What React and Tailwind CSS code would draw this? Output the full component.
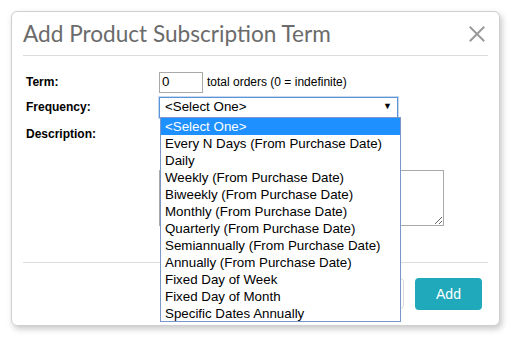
import React from "react";

const options = [
  "<Select One>",
  "Every N Days (From Purchase Date)",
  "Daily",
  "Weekly (From Purchase Date)",
  "Biweekly (From Purchase Date)",
  "Monthly (From Purchase Date)",
  "Quarterly (From Purchase Date)",
  "Semiannually (From Purchase Date)",
  "Annually (From Purchase Date)",
  "Fixed Day of Week",
  "Fixed Day of Month",
  "Specific Dates Annually",
];

export default function App() {
  return (
    <div className="relative w-[526px] h-[349px] bg-white overflow-hidden pt-[11px] pl-[11px] [font-family:'Liberation_Sans',Arial,sans-serif]">
      <div className="relative w-[489px] h-[315px] bg-white border border-[#cfcfcf] rounded-[6px] shadow-[2px_3px_6px_rgba(0,0,0,0.22)] flex flex-col">
        {/* header */}
        <div className="mx-[11px] h-[44px] shrink-0 border-b border-[#dcdcdc] flex items-center justify-between">
          <h1 className="text-[22.6px] leading-none text-[#6b6b6b] [font-family:Lato,'Open_Sans',sans-serif] mt-[1px]">
            Add Product Subscription Term
          </h1>
          <svg width="16" height="16" viewBox="0 0 16 16" className="mr-[3px] mt-[1px]">
            <path d="M1.5 1.5 L14.5 14.5 M14.5 1.5 L1.5 14.5" stroke="#9a9a9a" strokeWidth="2" strokeLinecap="square" />
          </svg>
        </div>
        {/* body */}
        <div className="flex-1 pl-[14px] pr-[43px] pt-[16px] text-[12px] text-black">
          <div className="flex items-center h-[20px]">
            <div className="w-[133px] font-bold">Term:</div>
            <div className="w-[44px] h-[21px] border border-[#a9a9a9] flex items-center pl-[2px] text-[13.33px]">0</div>
            <div className="ml-[4px]">total orders (0 = indefinite)</div>
          </div>
          <div className="flex items-center h-[20px] mt-[5px]">
            <div className="w-[133px] font-bold">Frequency:</div>
            <div className="w-[239px] h-[21px] border border-[#5b93d8] shadow-[0_0_0_1px_rgba(91,147,216,0.35)] flex items-center justify-between pl-[5px] pr-[5px] text-[13.33px] bg-white">
              <span>&lt;Select One&gt;</span>
              <span className="text-[9px]">▼</span>
            </div>
          </div>
          <div className="flex mt-[10px]">
            <div className="w-[133px] font-bold leading-[15px]">Description:</div>
          </div>
          <div className="flex mt-[28px]">
            <div className="w-[133px]"></div>
            <textarea className="w-[285px] h-[56px] border border-[#a9a9a9] resize-y outline-none" defaultValue="" />
          </div>
        </div>
        {/* footer */}
        <div className="mx-[11px] shrink-0 border-t border-[#dcdcdc] h-[63px] flex items-start justify-end pt-[15px] pr-[6px] gap-[11px]">
          <button className="w-[70px] h-[31px] border border-[#d9d9d9] rounded-[4px] bg-white text-[14px] text-[#333]">Cancel</button>
          <button className="w-[67px] h-[32px] rounded-[4px] bg-[#1fa9bb] text-white text-[14px]">Add</button>
        </div>

        {/* open dropdown list */}
        <div className="absolute left-[148px] top-[105px] w-[241px] h-[205px] bg-white border border-[#7b96c9] text-[13.33px] text-black">
          {options.map((o, i) => (
            <div
              key={o}
              className={
                i === 0
                  ? "h-[17px] leading-[17px] pl-[4px] bg-[#1e90ff] text-white"
                  : "h-[17px] leading-[17px] pl-[4px]"
              }
            >
              {o}
            </div>
          ))}
        </div>
      </div>
    </div>
  );
}
